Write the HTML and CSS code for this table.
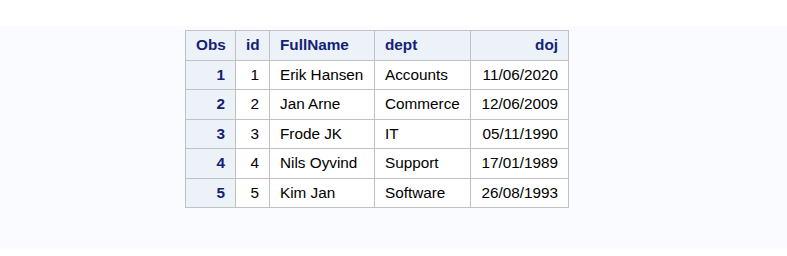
FILE: index.html
```html
<!DOCTYPE html>
<html>
<head>
<meta charset="utf-8">
<link rel="stylesheet" href="styles.css">
</head>
<body>
<div class="band">
  <table class="table">
    <thead>
      <tr>
        <th class="hdr c-obs r">Obs</th>
        <th class="hdr c-id r">id</th>
        <th class="hdr c-name">FullName</th>
        <th class="hdr c-dept">dept</th>
        <th class="hdr c-doj r">doj</th>
      </tr>
    </thead>
    <tbody>
      <tr><th class="rowhdr r">1</th><td class="r">1</td><td>Erik Hansen</td><td>Accounts</td><td class="r">11/06/2020</td></tr>
      <tr><th class="rowhdr r">2</th><td class="r">2</td><td>Jan Arne</td><td>Commerce</td><td class="r">12/06/2009</td></tr>
      <tr><th class="rowhdr r">3</th><td class="r">3</td><td>Frode JK</td><td>IT</td><td class="r">05/11/1990</td></tr>
      <tr><th class="rowhdr r">4</th><td class="r">4</td><td>Nils Oyvind</td><td>Support</td><td class="r">17/01/1989</td></tr>
      <tr><th class="rowhdr r">5</th><td class="r">5</td><td>Kim Jan</td><td>Software</td><td class="r">26/08/1993</td></tr>
    </tbody>
  </table>
</div>
</body>
</html>
```
FILE: styles.css
```css
html, body {
  margin: 0;
  padding: 0;
  background: #ffffff;
}
body {
  font-family: "Liberation Sans", Arial, sans-serif;
}
.band {
  margin-top: 26px;
  height: 223px;
  background: #fafbfe;
  padding: 4px 0 0 185px;
  box-sizing: border-box;
}
.table {
  border-collapse: collapse;
  table-layout: fixed;
  width: 383px;
  border: 1px solid #c1c1c1;
  font-size: 15.3px;
  color: #000000;
}
.table th,
.table td {
  border: 1px solid #c1c1c1;
  padding: 6px 10px;
  line-height: 16.5px;
  text-align: left;
  white-space: nowrap;
  overflow: hidden;
  background: #ffffff;
  font-weight: normal;
}
.table .hdr,
.table .rowhdr {
  background: #edf2f9;
  color: #112277;
  font-weight: bold;
}
.table .r {
  text-align: right;
}
.c-obs { width: 50px; }
.c-id { width: 34px; }
.c-name { width: 105px; }
.c-dept { width: 96px; }
.c-doj { width: 98px; }
.table .c-obs, .table .c-id, .table .c-name, .table .c-dept, .table .c-doj {
  box-sizing: border-box;
}
```
